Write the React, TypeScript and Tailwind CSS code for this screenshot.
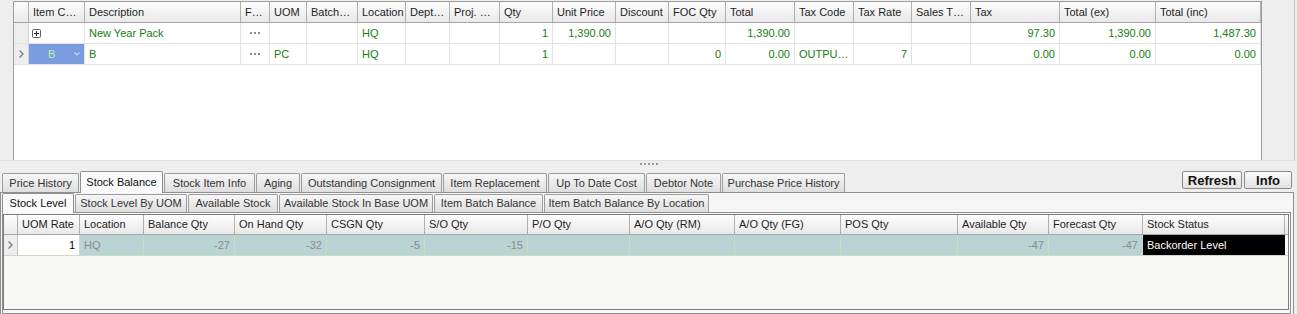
import React from "react";

type Col = { label: string; w: string };
type Cell = { text?: string; right?: boolean; kind?: "expand" | "code" | "dots" | "white" | "black" };

const topCols: Col[] = [
  { label: "Item C…", w: "w-[56px]" },
  { label: "Description", w: "w-[156px]" },
  { label: "F…", w: "w-[29px]" },
  { label: "UOM", w: "w-[37px]" },
  { label: "Batch…", w: "w-[51px]" },
  { label: "Location", w: "w-[48px]" },
  { label: "Dept…", w: "w-[44px]" },
  { label: "Proj. …", w: "w-[50px]" },
  { label: "Qty", w: "w-[53px]" },
  { label: "Unit Price", w: "w-[63px]" },
  { label: "Discount", w: "w-[53px]" },
  { label: "FOC Qty", w: "w-[57px]" },
  { label: "Total", w: "w-[69px]" },
  { label: "Tax Code", w: "w-[59px]" },
  { label: "Tax Rate", w: "w-[58px]" },
  { label: "Sales T…", w: "w-[59px]" },
  { label: "Tax", w: "w-[89px]" },
  { label: "Total (ex)", w: "w-[96px]" },
  { label: "Total (inc)", w: "w-[105px]" },
];

const topRows: Cell[][] = [
  [
    { kind: "expand" },
    { text: "New Year Pack" },
    { kind: "dots" },
    {},
    {},
    { text: "HQ" },
    {},
    {},
    { text: "1", right: true },
    { text: "1,390.00", right: true },
    {},
    {},
    { text: "1,390.00", right: true },
    {},
    {},
    {},
    { text: "97.30", right: true },
    { text: "1,390.00", right: true },
    { text: "1,487.30", right: true },
  ],
  [
    { kind: "code", text: "B" },
    { text: "B" },
    { kind: "dots" },
    { text: "PC" },
    {},
    { text: "HQ" },
    {},
    {},
    { text: "1", right: true },
    {},
    {},
    { text: "0", right: true },
    { text: "0.00", right: true },
    { text: "OUTPU…" },
    { text: "7", right: true },
    {},
    { text: "0.00", right: true },
    { text: "0.00", right: true },
    { text: "0.00", right: true },
  ],
];

const bottomCols: Col[] = [
  { label: "UOM Rate", w: "w-[62px]" },
  { label: "Location", w: "w-[64px]" },
  { label: "Balance Qty", w: "w-[91px]" },
  { label: "On Hand Qty", w: "w-[92px]" },
  { label: "CSGN Qty", w: "w-[98px]" },
  { label: "S/O Qty", w: "w-[103px]" },
  { label: "P/O Qty", w: "w-[102px]" },
  { label: "A/O Qty (RM)", w: "w-[105px]" },
  { label: "A/O Qty (FG)", w: "w-[106px]" },
  { label: "POS Qty", w: "w-[117px]" },
  { label: "Available Qty", w: "w-[91px]" },
  { label: "Forecast Qty", w: "w-[94px]" },
  { label: "Stock Status", w: "w-[142px]" },
];

const bottomRow: Cell[] = [
  { kind: "white", text: "1", right: true },
  { text: "HQ" },
  { text: "-27", right: true },
  { text: "-32", right: true },
  { text: "-5", right: true },
  { text: "-15", right: true },
  {},
  {},
  {},
  {},
  { text: "-47", right: true },
  { text: "-47", right: true },
  { kind: "black", text: "Backorder Level" },
];

const mainTabs = [
  { label: "Price History", w: "w-[77px]" },
  { label: "Stock Balance", w: "w-[83px]", active: true },
  { label: "Stock Item Info", w: "w-[91px]" },
  { label: "Aging", w: "w-[44px]" },
  { label: "Outstanding Consignment", w: "w-[141px]" },
  { label: "Item Replacement", w: "w-[104px]" },
  { label: "Up To Date Cost", w: "w-[97px]" },
  { label: "Debtor Note", w: "w-[75px]" },
  { label: "Purchase Price History", w: "w-[123px]" },
];

const subTabs = [
  { label: "Stock Level", w: "w-[72px]", active: true },
  { label: "Stock Level By UOM", w: "w-[112px]" },
  { label: "Available Stock", w: "w-[90px]" },
  { label: "Available Stock In Base UOM", w: "w-[154px]" },
  { label: "Item Batch Balance", w: "w-[109px]" },
  { label: "Item Batch Balance By Location", w: "w-[165px]" },
];

function RowArrow() {
  return (
    <svg width="5" height="8" viewBox="0 0 5 8" className="text-[#7a7a7a]">
      <path d="M0.5 0.5 L4 4 L0.5 7.5" fill="none" stroke="currentColor" strokeWidth="1.3" />
    </svg>
  );
}

function TopCell({ cell, w }: { cell: Cell; w: string }) {
  if (cell.kind === "expand") {
    return (
      <div className={`${w} h-full shrink-0 border-r border-[#e3e3e3] flex items-center pl-[3px]`}>
        <svg width="9" height="9" viewBox="0 0 9 9">
          <rect x="0.5" y="0.5" width="8" height="8" rx="1" fill="#fff" stroke="#5e5e5e" />
          <path d="M2 4.5 H7 M4.5 2 V7" stroke="#222" strokeWidth="1" />
        </svg>
      </div>
    );
  }
  if (cell.kind === "code") {
    return (
      <div className={`${w} h-full shrink-0 border-r border-[#e3e3e3] bg-[#7c9ce0] flex items-center justify-between pl-[19px] pr-[4px] text-[#b4f5a8]`}>
        <span>{cell.text}</span>
        <svg width="6" height="4" viewBox="0 0 6 4">
          <path d="M0.5 0.5 L3 3 L5.5 0.5" fill="none" stroke="#c8d2ea" strokeWidth="1.2" />
        </svg>
      </div>
    );
  }
  if (cell.kind === "dots") {
    return (
      <div className={`${w} h-full shrink-0 border-r border-[#e3e3e3] flex items-center justify-center gap-[2px]`}>
        <span className="w-[2px] h-[2px] bg-[#8a8a8a]" />
        <span className="w-[2px] h-[2px] bg-[#8a8a8a]" />
        <span className="w-[2px] h-[2px] bg-[#8a8a8a]" />
      </div>
    );
  }
  return (
    <div
      className={`${w} h-full shrink-0 border-r border-[#e3e3e3] flex items-center px-[4px] text-[#15800f] whitespace-nowrap overflow-hidden ${
        cell.right ? "justify-end" : ""
      }`}
    >
      {cell.text}
    </div>
  );
}

function BottomCell({ cell, w }: { cell: Cell; w: string }) {
  let tone = "bg-[#b9d4d3] text-[#8b8b8b] border-[#c9dcc4]";
  if (cell.kind === "white") tone = "bg-white text-black border-[#d4d4d4]";
  if (cell.kind === "black") tone = "bg-black text-white border-black";
  return (
    <div
      className={`${w} h-full shrink-0 border-r flex items-center px-[4px] whitespace-nowrap ${tone} ${
        cell.right ? "justify-end" : ""
      }`}
    >
      {cell.text}
    </div>
  );
}

export default function App() {
  return (
    <div className="w-[1297px] h-[314px] overflow-hidden bg-[#eeeeee] font-['Liberation_Sans',Arial,sans-serif] text-[11px] leading-none text-[#222]">
      {/* top grid area */}
      <div className="h-[160px] flex pt-[1px] border-r border-[#c8c8c8] w-[1295px]">
        <div className="w-[13px] shrink-0" />
        <div className="w-[1249px] h-[159px] shrink-0 bg-white border border-b-0 border-[#9c9c9c] flex flex-col">
          <div className="h-[21px] flex border-b border-[#a6a6a6] bg-gradient-to-b from-[#fdfdfd] to-[#e9e9e9]">
            <div className="w-[15px] h-full shrink-0 border-r border-[#b0b0b0]" />
            {topCols.map((c) => (
              <div
                key={c.label}
                className={`${c.w} h-full shrink-0 border-r border-[#b0b0b0] flex items-center px-[4px] whitespace-nowrap overflow-hidden text-[#1e1e1e]`}
              >
                {c.label}
              </div>
            ))}
          </div>
          {topRows.map((row, i) => (
            <div key={i} className="h-[21px] flex border-b border-[#e3e3e3]">
              <div className="w-[15px] h-full shrink-0 border-r border-[#d4d4d4] bg-[#eeeeee] flex items-center justify-center">
                {i === 1 && <RowArrow />}
              </div>
              {row.map((cell, j) => (
                <TopCell key={j} cell={cell} w={topCols[j].w} />
              ))}
            </div>
          ))}
        </div>
        <div className="flex-1" />
      </div>

      {/* splitter */}
      <div className="h-[10px] flex items-center justify-center border-t border-[#e2e2e2]">
        <div className="flex gap-[2px] -mt-[3px]">
          {[0, 1, 2, 3, 4].map((d) => (
            <span key={d} className="w-[2px] h-[2px] bg-[#9a9a9a]" />
          ))}
        </div>
      </div>

      {/* main tabs */}
      <div className="h-[22px] flex items-end pl-[2px] pr-[5px]">
        <div className="flex items-end gap-[1px]">
          {mainTabs.map((t) =>
            t.active ? (
              <div
                key={t.label}
                className={`${t.w} h-[22px] shrink-0 bg-[#fafafa] border border-b-0 border-[#8f8f8f] rounded-t-[2px] flex items-center justify-center text-[#111] relative -mb-[1px]`}
              >
                {t.label}
              </div>
            ) : (
              <div
                key={t.label}
                className={`${t.w} h-[19px] shrink-0 bg-gradient-to-b from-[#f7f7f7] to-[#dedede] border border-b-0 border-[#9d9d9d] rounded-t-[2px] flex items-center justify-center text-[#333]`}
              >
                {t.label}
              </div>
            )
          )}
        </div>
        <div className="flex-1" />
        <div className="self-start mt-[1px] flex gap-[2px]">
          <div className="w-[60px] h-[18px] border border-[#8b8b8b] rounded-[2px] bg-gradient-to-b from-[#fbfbfb] to-[#e2e2e2] flex items-center justify-center font-bold text-[13px] text-[#111]">
            Refresh
          </div>
          <div className="w-[48px] h-[18px] border border-[#8b8b8b] rounded-[2px] bg-gradient-to-b from-[#fbfbfb] to-[#e2e2e2] flex items-center justify-center font-bold text-[13px] text-[#111]">
            Info
          </div>
        </div>
      </div>

      {/* tab panel */}
      <div className="w-[1294px] h-[122px] border border-b-0 border-[#8f8f8f] bg-[#f6f6f6] pl-[1px] pr-[2px]">
        {/* sub tabs */}
        <div className="h-[19px] flex items-end gap-[1px]">
          {subTabs.map((t) =>
            t.active ? (
              <div
                key={t.label}
                className={`${t.w} h-[20px] shrink-0 bg-[#fafafa] border border-b-0 border-[#8f8f8f] rounded-t-[2px] flex items-center justify-center text-[#111] -mb-[1px] relative`}
              >
                {t.label}
              </div>
            ) : (
              <div
                key={t.label}
                className={`${t.w} h-[18px] shrink-0 bg-gradient-to-b from-[#f7f7f7] to-[#dedede] border border-b-0 border-[#9d9d9d] rounded-t-[2px] flex items-center justify-center text-[#333]`}
              >
                {t.label}
              </div>
            )
          )}
        </div>
        <div className="h-[102px] border border-[#8f8f8f] bg-[#fafafa] pt-[1px] pl-0 pr-[2px]">
          <div className="w-[1286px] h-[96px] border border-[#7d7d7d] bg-[#f8f8f4] flex flex-col">
            <div className="h-[20px] flex border-b border-[#a6a6a6] bg-gradient-to-b from-[#fdfdfd] to-[#e9e9e9]">
              <div className="w-[14px] h-full shrink-0 border-r border-[#b0b0b0]" />
              {bottomCols.map((c) => (
                <div
                  key={c.label}
                  className={`${c.w} h-full shrink-0 border-r border-[#b0b0b0] flex items-center px-[4px] whitespace-nowrap overflow-hidden text-[#1e1e1e]`}
                >
                  {c.label}
                </div>
              ))}
            </div>
            <div className="h-[21px] flex border-b border-[#c9dcc4]">
              <div className="w-[14px] h-full shrink-0 border-r border-[#c4c4c4] bg-[#eeeeee] flex items-center justify-center">
                <RowArrow />
              </div>
              {bottomRow.map((cell, j) => (
                <BottomCell key={j} cell={cell} w={bottomCols[j].w} />
              ))}
            </div>
          </div>
        </div>
      </div>
    </div>
  );
}
